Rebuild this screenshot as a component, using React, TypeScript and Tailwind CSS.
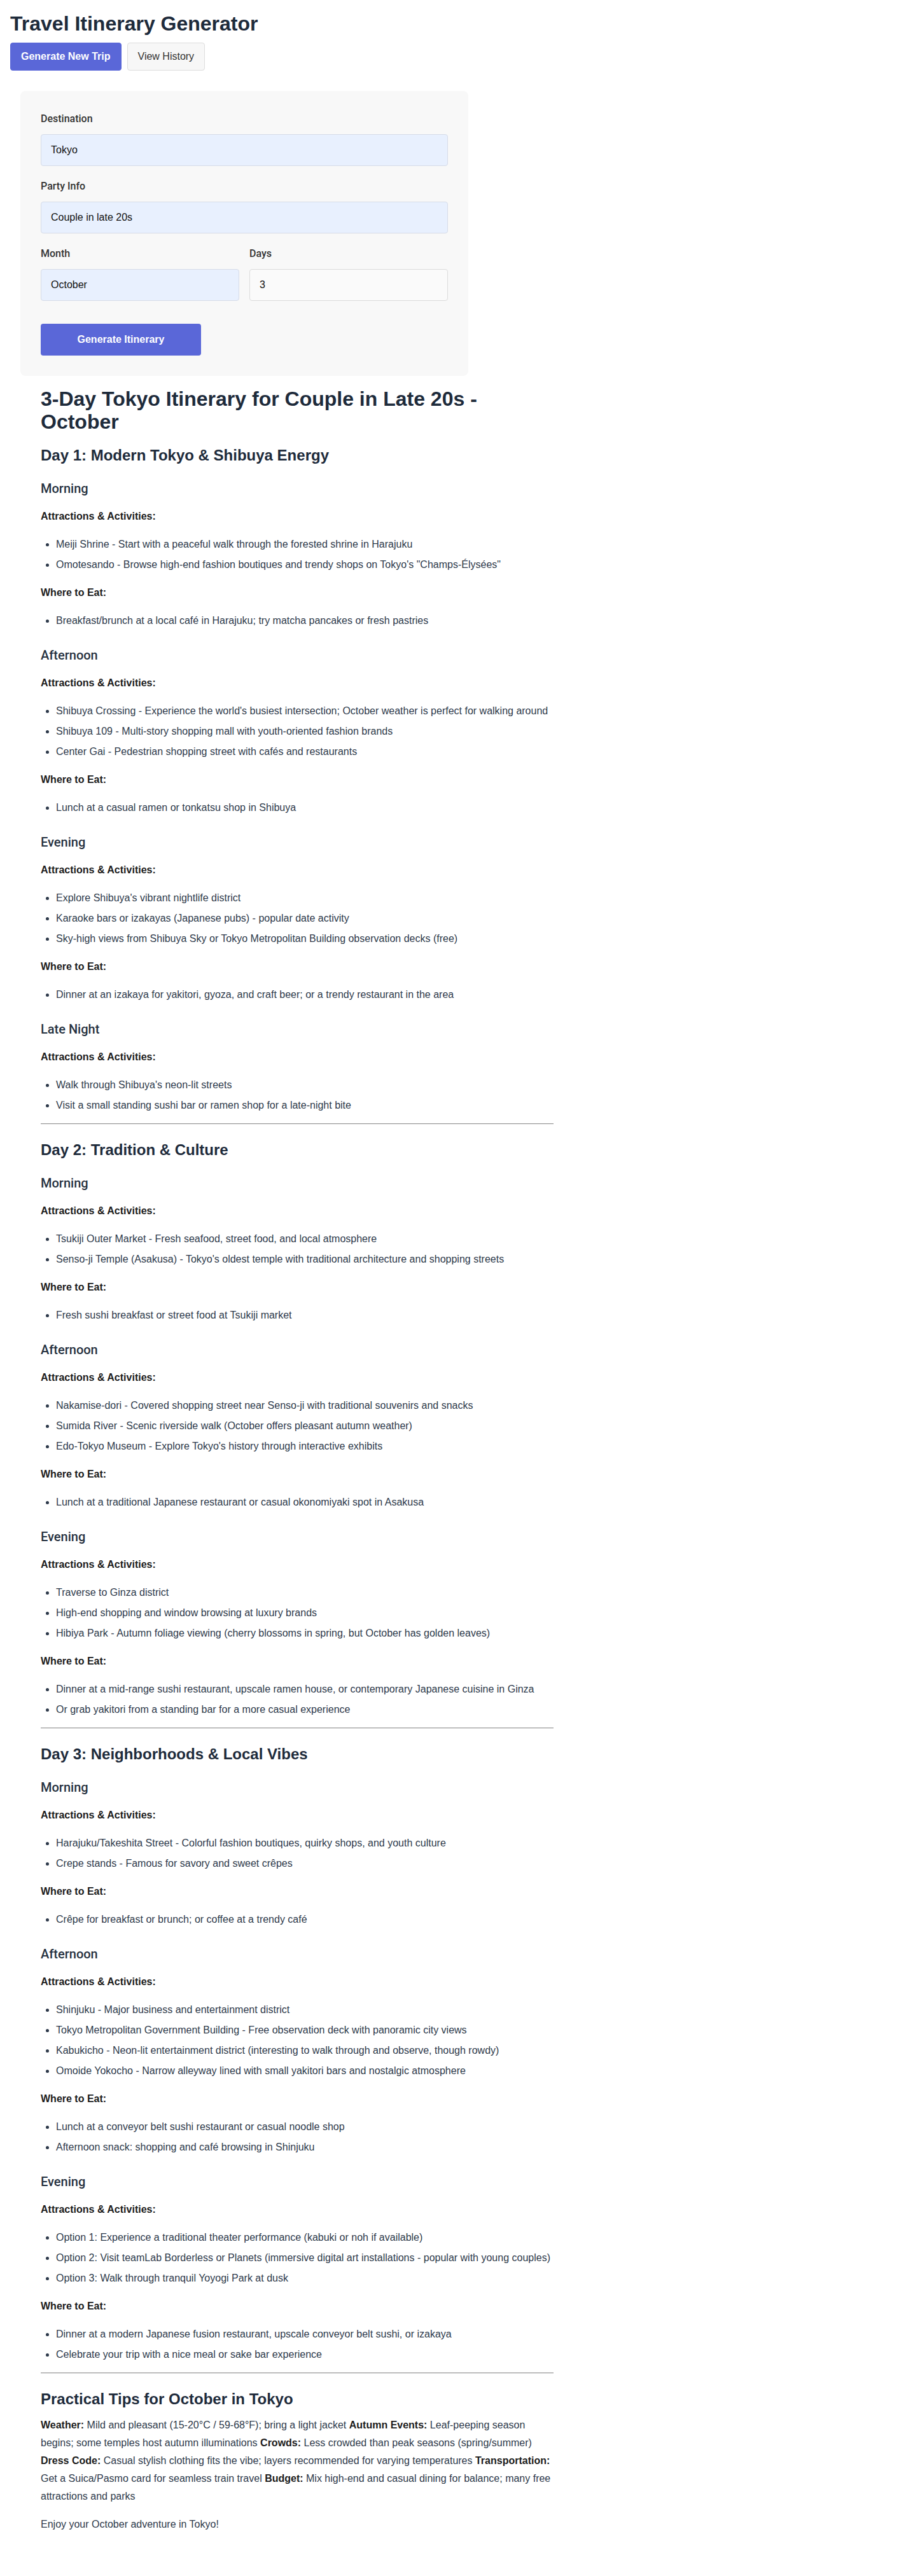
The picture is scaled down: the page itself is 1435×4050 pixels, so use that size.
import { useState } from 'react';

type Block = { label: string; items: string[] };
type Period = { name: string; blocks: Block[] };
type Day = { title: string; periods: Period[] };

const days: Day[] = [
    {
        title: 'Day 1: Modern Tokyo & Shibuya Energy',
        periods: [
            {
                name: 'Morning',
                blocks: [
                    {
                        label: 'Attractions & Activities:',
                        items: [
                            'Meiji Shrine - Start with a peaceful walk through the forested shrine in Harajuku',
                            'Omotesando - Browse high-end fashion boutiques and trendy shops on Tokyo\'s "Champs-Élysées"',
                        ],
                    },
                    { label: 'Where to Eat:', items: ['Breakfast/brunch at a local café in Harajuku; try matcha pancakes or fresh pastries'] },
                ],
            },
            {
                name: 'Afternoon',
                blocks: [
                    {
                        label: 'Attractions & Activities:',
                        items: [
                            "Shibuya Crossing - Experience the world's busiest intersection; October weather is perfect for walking around",
                            'Shibuya 109 - Multi-story shopping mall with youth-oriented fashion brands',
                            'Center Gai - Pedestrian shopping street with cafés and restaurants',
                        ],
                    },
                    { label: 'Where to Eat:', items: ['Lunch at a casual ramen or tonkatsu shop in Shibuya'] },
                ],
            },
            {
                name: 'Evening',
                blocks: [
                    {
                        label: 'Attractions & Activities:',
                        items: [
                            "Explore Shibuya's vibrant nightlife district",
                            'Karaoke bars or izakayas (Japanese pubs) - popular date activity',
                            'Sky-high views from Shibuya Sky or Tokyo Metropolitan Building observation decks (free)',
                        ],
                    },
                    { label: 'Where to Eat:', items: ['Dinner at an izakaya for yakitori, gyoza, and craft beer; or a trendy restaurant in the area'] },
                ],
            },
            {
                name: 'Late Night',
                blocks: [
                    {
                        label: 'Attractions & Activities:',
                        items: [
                            "Walk through Shibuya's neon-lit streets",
                            'Visit a small standing sushi bar or ramen shop for a late-night bite',
                        ],
                    },
                ],
            },
        ],
    },
    {
        title: 'Day 2: Tradition & Culture',
        periods: [
            {
                name: 'Morning',
                blocks: [
                    {
                        label: 'Attractions & Activities:',
                        items: [
                            'Tsukiji Outer Market - Fresh seafood, street food, and local atmosphere',
                            "Senso-ji Temple (Asakusa) - Tokyo's oldest temple with traditional architecture and shopping streets",
                        ],
                    },
                    { label: 'Where to Eat:', items: ['Fresh sushi breakfast or street food at Tsukiji market'] },
                ],
            },
            {
                name: 'Afternoon',
                blocks: [
                    {
                        label: 'Attractions & Activities:',
                        items: [
                            'Nakamise-dori - Covered shopping street near Senso-ji with traditional souvenirs and snacks',
                            'Sumida River - Scenic riverside walk (October offers pleasant autumn weather)',
                            "Edo-Tokyo Museum - Explore Tokyo's history through interactive exhibits",
                        ],
                    },
                    { label: 'Where to Eat:', items: ['Lunch at a traditional Japanese restaurant or casual okonomiyaki spot in Asakusa'] },
                ],
            },
            {
                name: 'Evening',
                blocks: [
                    {
                        label: 'Attractions & Activities:',
                        items: [
                            'Traverse to Ginza district',
                            'High-end shopping and window browsing at luxury brands',
                            'Hibiya Park - Autumn foliage viewing (cherry blossoms in spring, but October has golden leaves)',
                        ],
                    },
                    {
                        label: 'Where to Eat:',
                        items: [
                            'Dinner at a mid-range sushi restaurant, upscale ramen house, or contemporary Japanese cuisine in Ginza',
                            'Or grab yakitori from a standing bar for a more casual experience',
                        ],
                    },
                ],
            },
        ],
    },
    {
        title: 'Day 3: Neighborhoods & Local Vibes',
        periods: [
            {
                name: 'Morning',
                blocks: [
                    {
                        label: 'Attractions & Activities:',
                        items: [
                            'Harajuku/Takeshita Street - Colorful fashion boutiques, quirky shops, and youth culture',
                            'Crepe stands - Famous for savory and sweet crêpes',
                        ],
                    },
                    { label: 'Where to Eat:', items: ['Crêpe for breakfast or brunch; or coffee at a trendy café'] },
                ],
            },
            {
                name: 'Afternoon',
                blocks: [
                    {
                        label: 'Attractions & Activities:',
                        items: [
                            'Shinjuku - Major business and entertainment district',
                            'Tokyo Metropolitan Government Building - Free observation deck with panoramic city views',
                            'Kabukicho - Neon-lit entertainment district (interesting to walk through and observe, though rowdy)',
                            'Omoide Yokocho - Narrow alleyway lined with small yakitori bars and nostalgic atmosphere',
                        ],
                    },
                    {
                        label: 'Where to Eat:',
                        items: [
                            'Lunch at a conveyor belt sushi restaurant or casual noodle shop',
                            'Afternoon snack: shopping and café browsing in Shinjuku',
                        ],
                    },
                ],
            },
            {
                name: 'Evening',
                blocks: [
                    {
                        label: 'Attractions & Activities:',
                        items: [
                            'Option 1: Experience a traditional theater performance (kabuki or noh if available)',
                            'Option 2: Visit teamLab Borderless or Planets (immersive digital art installations - popular with young couples)',
                            'Option 3: Walk through tranquil Yoyogi Park at dusk',
                        ],
                    },
                    {
                        label: 'Where to Eat:',
                        items: [
                            'Dinner at a modern Japanese fusion restaurant, upscale conveyor belt sushi, or izakaya',
                            'Celebrate your trip with a nice meal or sake bar experience',
                        ],
                    },
                ],
            },
        ],
    },
];

function Field({ label, value, autofill = true }: { label: string; value: string; autofill?: boolean }) {
    return (
        <div className="mb-5">
            <label className="block mb-3 text-[16px] leading-6 text-[#333] font-['Roboto',sans-serif] font-medium">{label}</label>
            <input
                readOnly
                value={value}
                className={
                    autofill
                        ? 'w-full h-[50px] px-[15px] rounded border border-[#d6dce8] bg-[#e8f0fe] text-[16px] text-[#111] outline-none'
                        : 'w-full h-[50px] px-[15px] rounded border border-[#dcdcdc] bg-[#fafafa] text-[16px] text-[#111] outline-none'
                }
            />
        </div>
    );
}

function DaySection({ day }: { day: Day }) {
    return (
        <section>
            <h2 className="text-[24px] leading-8 font-bold text-[#1e2b3b] mb-[22px]">{day.title}</h2>
            {day.periods.map((period, i) => (
                <div key={period.name} className={i > 0 ? 'mt-7' : ''}>
                    <h3 className="text-[20px] leading-7 font-medium text-[#263140] mb-[18px] font-['Roboto',sans-serif]">{period.name}</h3>
                    {period.blocks.map((block, j) => (
                        <div key={block.label} className={j > 0 ? 'mt-5' : ''}>
                            <p className="text-[16px] leading-6 font-bold text-[#1c1c1c] mb-5">{block.label}</p>
                            <ul className="list-disc pl-6 space-y-2 text-[16px] leading-6 text-[#2e3a4b]">
                                {block.items.map((item) => (
                                    <li key={item}>{item}</li>
                                ))}
                            </ul>
                        </div>
                    ))}
                </div>
            ))}
        </section>
    );
}

export default function App() {
    const [tab, setTab] = useState<'new' | 'history'>('new');

    return (
        <div className="min-h-screen bg-white px-4 pt-[18px] pb-16 font-['Liberation_Sans',Arial,sans-serif] text-[#2e3a4b]">
            <h1 className="text-[32px] leading-[38px] font-bold text-[#1e2b3b] mb-[11px]">Travel Itinerary Generator</h1>

            <div className="flex gap-[9px]">
                <button
                    onClick={() => setTab('new')}
                    className="h-11 px-4 rounded border border-[#5a67d8] bg-[#5a67d8] text-white text-[16px] font-bold"
                >
                    Generate New Trip
                </button>
                <button
                    onClick={() => setTab('history')}
                    className="h-11 px-4 rounded border border-[#dddddd] bg-[#f7f7f7] text-[#333] text-[16px]"
                >
                    View History
                </button>
            </div>

            {tab === 'new' && (
                <div className="ml-4">
                    <div className="mt-8 w-[704px] rounded-lg bg-[#f8f8f8] p-8">
                        <Field label="Destination" value="Tokyo" />
                        <Field label="Party Info" value="Couple in late 20s" />
                        <div className="grid grid-cols-2 gap-4">
                            <Field label="Month" value="October" />
                            <Field label="Days" value="3" autofill={false} />
                        </div>
                        <button className="mt-4 w-[252px] h-[50px] rounded bg-[#5a67d8] text-white text-[16px] font-bold">
                            Generate Itinerary
                        </button>
                    </div>

                    <div className="mt-[18px] w-[870px] px-8">
                        <h2 className="text-[32px] leading-9 font-bold text-[#1e2b3b] mb-[19px]">
                            3-Day Tokyo Itinerary for Couple in Late 20s - October
                        </h2>

                        {days.map((day) => (
                            <div key={day.title}>
                                <DaySection day={day} />
                                <hr className="mt-4 mb-6 border-0 border-t border-t-[#9a9a9a] border-b border-b-[#e6e6e6]" />
                            </div>
                        ))}

                        <h2 className="text-[24px] leading-8 font-bold text-[#1e2b3b] mb-[11px]">Practical Tips for October in Tokyo</h2>
                        <p className="text-[16px] leading-7 text-[#2e3a4b]">
                            <strong className="text-[#1c1c1c]">Weather:</strong> Mild and pleasant (15-20°C / 59-68°F); bring a light jacket{' '}
                            <strong className="text-[#1c1c1c]">Autumn Events:</strong> Leaf-peeping season begins; some temples host autumn illuminations{' '}
                            <strong className="text-[#1c1c1c]">Crowds:</strong> Less crowded than peak seasons (spring/summer){' '}
                            <strong className="text-[#1c1c1c]">Dress Code:</strong> Casual stylish clothing fits the vibe; layers recommended for varying temperatures{' '}
                            <strong className="text-[#1c1c1c]">Transportation:</strong> Get a Suica/Pasmo card for seamless train travel{' '}
                            <strong className="text-[#1c1c1c]">Budget:</strong> Mix high-end and casual dining for balance; many free attractions and parks
                        </p>
                        <p className="mt-4 text-[16px] leading-7 text-[#2e3a4b]">Enjoy your October adventure in Tokyo!</p>
                    </div>
                </div>
            )}
        </div>
    );
}
